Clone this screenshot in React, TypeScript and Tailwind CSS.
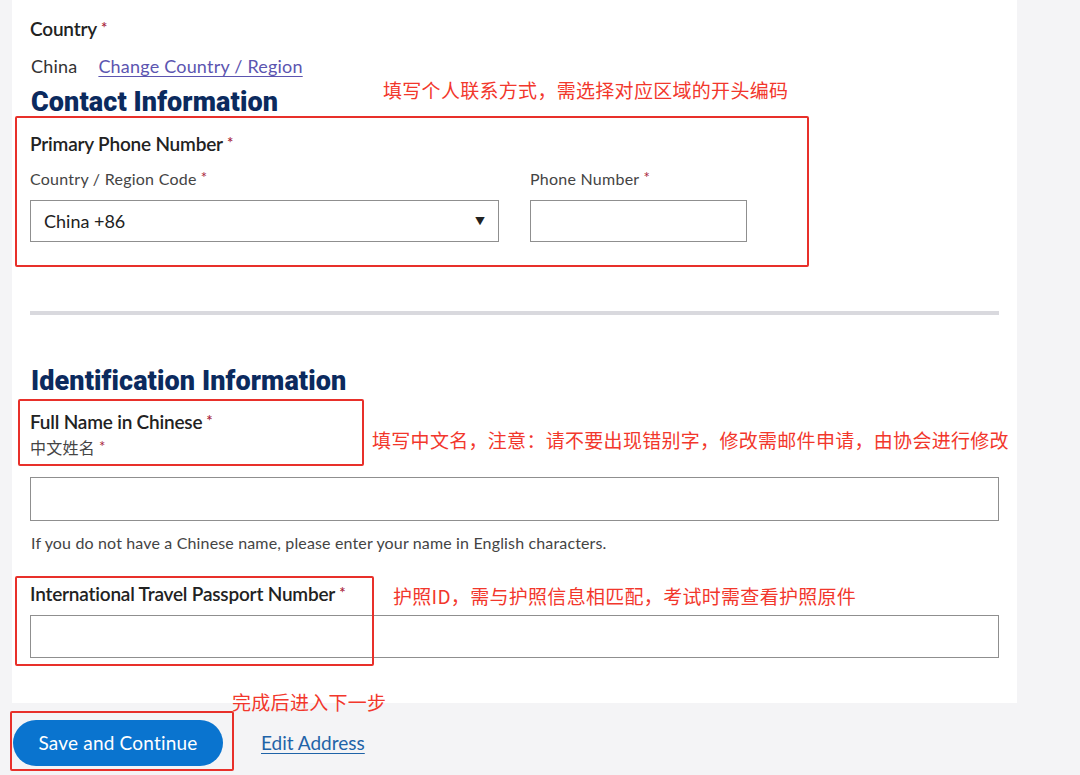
import React from "react";

const Req = () => <span className="text-[#a8243a] ml-[4px] text-[15px] align-top relative top-[-2px]">*</span>;

const annot = "absolute text-[19px] leading-[24px] tracking-[0.3px] text-[#f2372c] whitespace-nowrap";
const redBox = "absolute border-2 border-[#e8302a] rounded-[2px] pointer-events-none";
const cjk = { fontFamily: "'Noto Sans CJK SC', sans-serif" };
const heading = { fontFamily: "Roboto, sans-serif" };

function Label({ children }: { children: React.ReactNode }) {
  return <div className="text-[19px] leading-[24px] font-semibold tracking-[-0.2px]">{children}<Req /></div>;
}

function SubLabel({ children }: { children: React.ReactNode }) {
  return <div className="text-[16px] leading-[22px] text-[#444] tracking-[0.25px]">{children}<Req /></div>;
}

export default function App() {
  return (
    <div
      className="relative w-[1080px] h-[775px] overflow-hidden bg-[#f4f4f6]"
      style={{ fontFamily: "Lato, 'Open Sans', 'Noto Sans CJK SC', sans-serif" }}
    >
      <div className="ml-[12px] w-[1005px] bg-white pl-[18px] pt-[17px] pb-[45px] text-[#222] flex flex-col">
        <Label>Country</Label>
        <div className="mt-[13px] flex items-center text-[18px] leading-[24px] tracking-[0.2px]">
          <span className="text-[#333] ml-[1px]">China</span>
          <a className="ml-[21px] text-[#5c55b0] underline underline-offset-[3px] decoration-1" href="#">
            Change Country / Region
          </a>
        </div>
        <h2 className="mt-[8px] text-[27px] leading-[32px] font-black text-[#0b2a5e] ml-[1px] tracking-[0.1px]" style={heading}>
          Contact Information
        </h2>
        <div className="mt-[14px]">
          <Label>Primary Phone Number</Label>
        </div>
        <div className="mt-[12px] flex gap-[31px]">
          <div className="w-[469px] flex flex-col gap-[10px]">
            <SubLabel>Country / Region Code</SubLabel>
            <div className="h-[42px] border border-[#8f8f8f] flex items-center justify-between px-[13px] text-[18px] text-[#222]">
              <span>China +86</span>
              <span className="text-[10px] text-[#222]">▼</span>
            </div>
          </div>
          <div className="w-[217px] flex flex-col gap-[10px]">
            <SubLabel>Phone Number</SubLabel>
            <div className="h-[42px] border border-[#8f8f8f]" />
          </div>
        </div>
        <div className="mt-[69px] w-[969px] h-[4px] bg-[#d9d9de]" />
        <h2 className="mt-[50px] text-[27px] leading-[32px] font-black text-[#0b2a5e] ml-[1px] tracking-[0.1px]" style={heading}>
          Identification Information
        </h2>
        <div className="mt-[13px]">
          <Label>Full Name in Chinese</Label>
        </div>
        <div className="mt-[3px]">
          <SubLabel>中文姓名</SubLabel>
        </div>
        <div className="mt-[18px] w-[969px] h-[44px] border border-[#8f8f8f]" />
        <div className="mt-[12px] text-[16px] leading-[20px] text-[#444] ml-[1px] tracking-[0.15px]">
          If you do not have a Chinese name, please enter your name in English characters.
        </div>
        <div className="mt-[29px]">
          <Label>International Travel Passport Number</Label>
        </div>
        <div className="mt-[9px] w-[969px] h-[43px] border border-[#8f8f8f]" />
      </div>

      <div className="mt-[17px] pl-[13px] flex items-center gap-[38px]">
        <button className="h-[46px] w-[210px] rounded-full bg-[#0a74cf] text-white text-[19px] tracking-[0.2px]">
          Save and Continue
        </button>
        <a className="text-[19px] text-[#1f63a8] underline underline-offset-[3px]" href="#">
          Edit Address
        </a>
      </div>

      {/* annotation overlays */}
      <div className={redBox + " left-[15px] top-[116px] w-[794px] h-[151px]"} />
      <div className={redBox + " left-[18px] top-[399px] w-[346px] h-[67px]"} />
      <div className={redBox + " left-[15px] top-[576px] w-[359px] h-[90px]"} />
      <div className={redBox + " left-[10px] top-[711px] w-[224px] h-[60px]"} />

      <div className={annot + " left-[383px] top-[78px]"} style={cjk}>
        填写个人联系方式，需选择对应区域的开头编码
      </div>
      <div className={annot + " left-[372px] top-[428px]"} style={cjk}>
        填写中文名，注意：请不要出现错别字，修改需邮件申请，由协会进行修改
      </div>
      <div className={annot + " left-[393px] top-[584px]"} style={cjk}>
        护照ID，需与护照信息相匹配，考试时需查看护照原件
      </div>
      <div className={annot + " left-[232px] top-[690px]"} style={cjk}>
        完成后进入下一步
      </div>
    </div>
  );
}
